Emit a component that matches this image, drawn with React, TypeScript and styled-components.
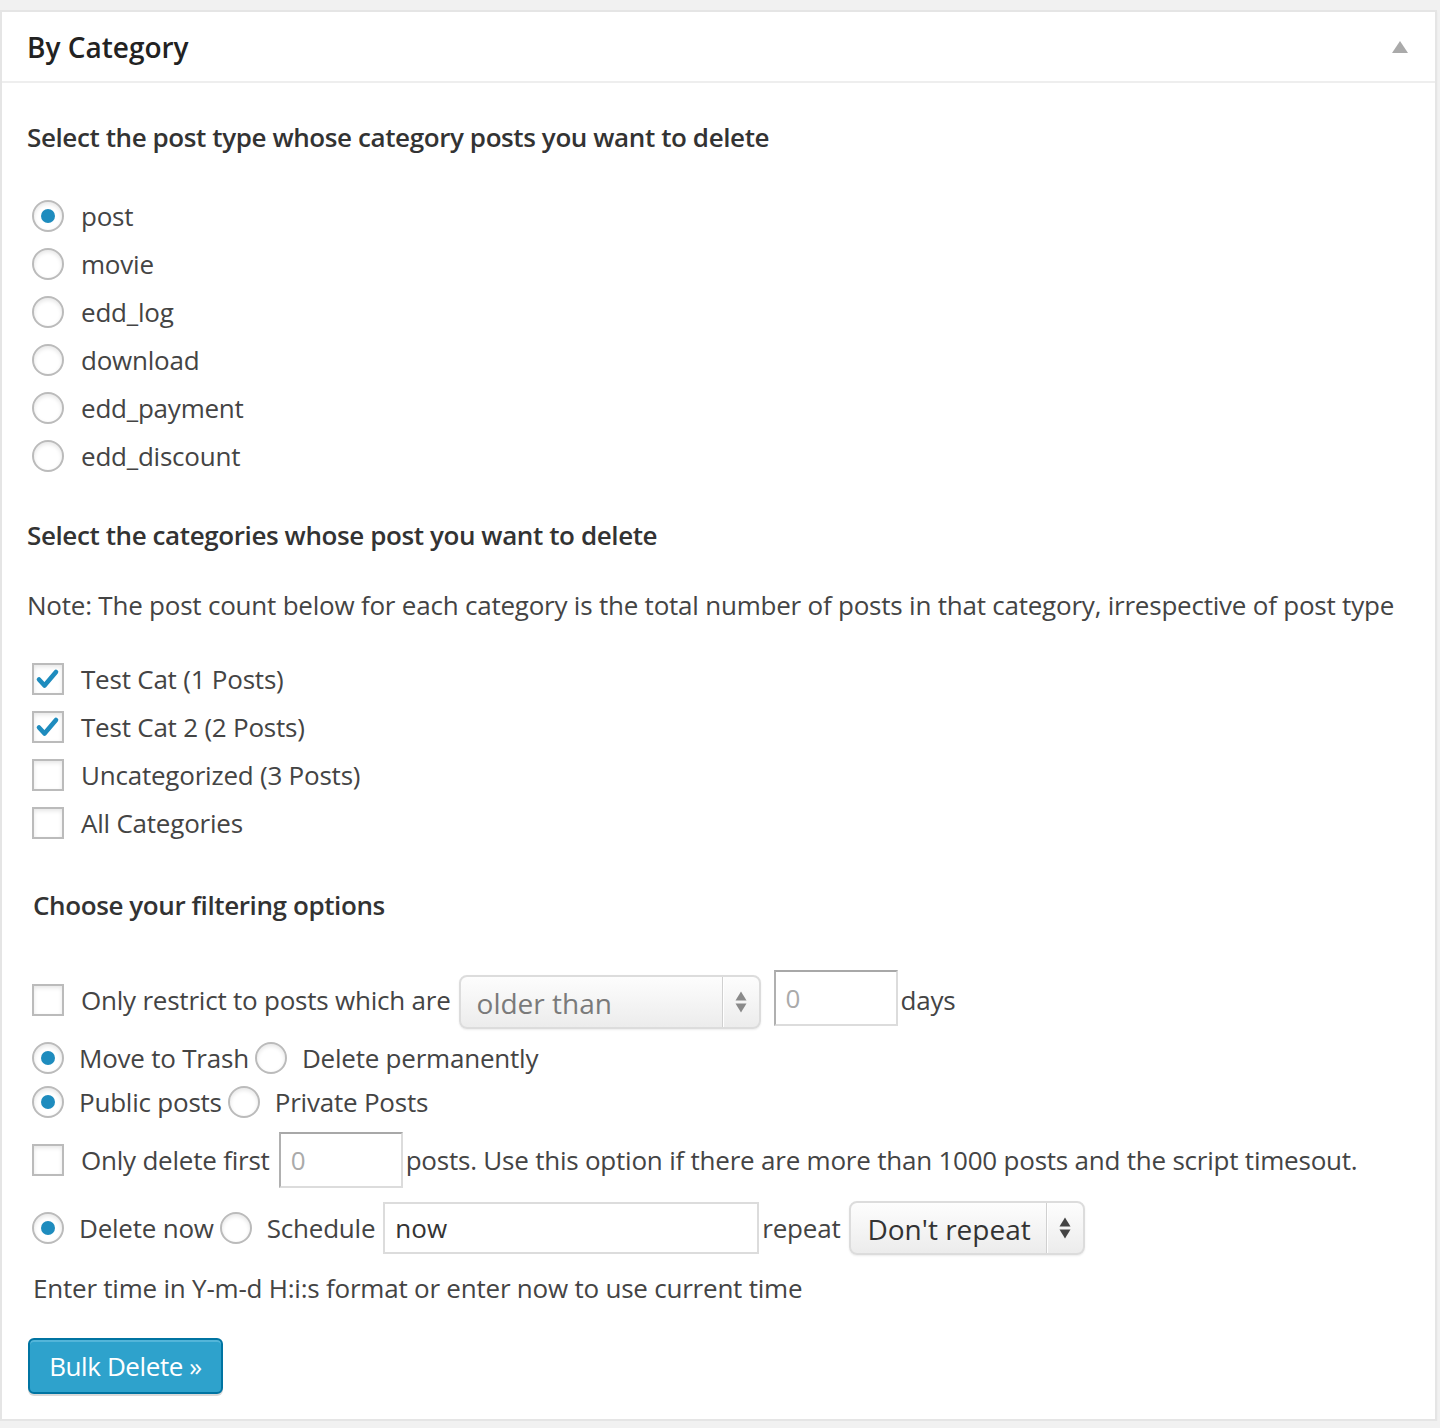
import React from "react";
import styled, { createGlobalStyle } from "styled-components";

const GlobalStyle = createGlobalStyle`
  html, body {
    margin: 0;
    padding: 0;
    background: #f1f1f1;
  }
  body {
    font-family: "Open Sans", "Noto Sans", sans-serif;
    color: #444;
    font-size: 26px;
    letter-spacing: -0.22px;
  }
`;

const Page = styled.div`
  padding-top: 10px;
`;

const Box = styled.div`
  width: 1433px;
  background: #fff;
  border: 2px solid #e5e5e5;
  box-shadow: 0 2px 2px rgba(0, 0, 0, 0.04);
`;

const BoxHeader = styled.div`
  height: 69px;
  display: flex;
  align-items: center;
  justify-content: space-between;
  padding: 0 26px 0 25px;
  border-bottom: 2px solid #eee;
`;

const BoxTitle = styled.h3`
  margin: 0;
  font-size: 28px;
  font-weight: 600;
  letter-spacing: 0;
  color: #222;
`;

const BoxBody = styled.div`
  padding: 0 25px 25px;
`;

const Heading = styled.h4<{ $top: number; $indent?: number }>`
  margin: ${(p) => p.$top}px 0 0;
  padding-left: ${(p) => p.$indent ?? 0}px;
  font-size: 26px;
  font-weight: 600;
  line-height: 36px;
  letter-spacing: -0.4px;
  color: #333;
`;

const Note = styled.p<{ $top: number; $indent?: number }>`
  margin: ${(p) => p.$top}px 0 0;
  padding-left: ${(p) => p.$indent ?? 0}px;
  font-size: 26px;
  line-height: 36px;
  color: #444;
  white-space: nowrap;
`;

const List = styled.div<{ $top: number }>`
  margin-top: ${(p) => p.$top}px;
  display: flex;
  flex-direction: column;
`;

const ListItem = styled.label`
  height: 48px;
  display: flex;
  align-items: center;
  gap: 17px;
  padding-left: 5px;
  font-size: 26px;
  color: #444;
`;

const RadioMark = styled.span<{ $on?: boolean }>`
  flex: none;
  box-sizing: border-box;
  width: 32px;
  height: 32px;
  border-radius: 50%;
  border: 2px solid #bbb;
  background: #fff;
  box-shadow: inset 0 2px 4px rgba(0, 0, 0, 0.1);
  display: flex;
  align-items: center;
  justify-content: center;
  &::before {
    content: "";
    display: ${(p) => (p.$on ? "block" : "none")};
    width: 14px;
    height: 14px;
    border-radius: 50%;
    background: #1e8cbe;
  }
`;

const CheckMark = styled.span`
  flex: none;
  box-sizing: border-box;
  width: 32px;
  height: 32px;
  border: 2px solid #bbb;
  background: #fff;
  box-shadow: inset 0 2px 4px rgba(0, 0, 0, 0.1);
  display: flex;
  align-items: center;
  justify-content: center;
`;

const Radio = ({ on }: { on?: boolean }) => <RadioMark $on={on} />;

const Checkbox = ({ on }: { on?: boolean }) => (
  <CheckMark>
    {on && (
      <svg width="28" height="28" viewBox="0 0 28 28">
        <path
          d="M5 14.5 L10.5 20.5 L22 7"
          fill="none"
          stroke="#1e8cbe"
          strokeWidth="4.6"
          strokeLinecap="round"
          strokeLinejoin="round"
        />
      </svg>
    )}
  </CheckMark>
);

const Filters = styled.div`
  margin-top: 47px;
  display: flex;
  flex-direction: column;
`;

const FilterRow = styled.div<{ $h: number }>`
  height: ${(p) => p.$h}px;
  display: flex;
  align-items: center;
  padding-left: 5px;
  font-size: 26px;
  color: #444;
  white-space: nowrap;
`;

const Label = styled.span<{ $left?: number; $right?: number }>`
  margin-left: ${(p) => p.$left ?? 0}px;
  margin-right: ${(p) => p.$right ?? 0}px;
`;

const SelectBox = styled.div<{ $w: number; $muted?: boolean }>`
  box-sizing: border-box;
  width: ${(p) => p.$w}px;
  height: 54px;
  display: flex;
  align-items: stretch;
  border: 2px solid #dcdcdc;
  border-radius: 8px;
  background: linear-gradient(to bottom, #fdfdfd 0%, #f3f3f3 60%, #ececec 100%);
  box-shadow: 0 1px 2px rgba(0, 0, 0, 0.08);
  color: ${(p) => (p.$muted ? "#7a7a7a" : "#333")};
  font-size: 28px;
  letter-spacing: 0;
  align-self: ${(p) => (p.$muted ? "flex-end" : "center")};
  margin-bottom: ${(p) => (p.$muted ? 1 : 0)}px;
`;

const SelectText = styled.span`
  flex: 1;
  display: flex;
  align-items: center;
  padding-left: 16px;
  padding-top: 2px;
`;

const SelectArrows = styled.span<{ $muted?: boolean }>`
  width: 36px;
  border-left: 1px solid #d0d0d0;
  box-shadow: inset 1px 0 0 #fff;
  display: flex;
  align-items: center;
  justify-content: center;
  color: ${(p) => (p.$muted ? "#8a8a8a" : "#444")};
`;

const Select = ({ w, text, muted }: { w: number; text: string; muted?: boolean }) => (
  <SelectBox $w={w} $muted={muted}>
    <SelectText>{text}</SelectText>
    <SelectArrows $muted={muted}>
      <svg width="12" height="24" viewBox="0 0 12 24">
        <path d="M6 1.5 L11.5 10.5 L0.5 10.5 Z" fill="currentColor" />
        <path d="M6 22.5 L11.5 13.5 L0.5 13.5 Z" fill="currentColor" />
      </svg>
    </SelectArrows>
  </SelectBox>
);

const TextField = styled.input<{ $w: number; $h: number; $sunken?: boolean }>`
  box-sizing: border-box;
  width: ${(p) => p.$w}px;
  height: ${(p) => p.$h}px;
  padding: 0 10px;
  font-family: "Open Sans", "Noto Sans", sans-serif;
  font-size: 26px;
  color: ${(p) => (p.$sunken ? "#aaa" : "#333")};
  background: #fff;
  border: 2px solid #dcdcdc;
  border-top-color: ${(p) => (p.$sunken ? "#a8a8a8" : "#dcdcdc")};
  border-left-color: ${(p) => (p.$sunken ? "#b0b0b0" : "#dcdcdc")};
  border-radius: 0;
  outline: none;
`;

const Button = styled.button`
  margin-top: 32px;
  margin-left: 1px;
  box-sizing: border-box;
  width: 195px;
  height: 56px;
  padding: 0;
  border: 2px solid #0074a2;
  border-radius: 6px;
  background: #2ea2cc;
  box-shadow: inset 0 2px 0 rgba(120, 200, 230, 0.5), 0 2px 0 rgba(0, 0, 0, 0.15);
  color: #fff;
  font-family: "Open Sans", "Noto Sans", sans-serif;
  font-size: 26px;
  letter-spacing: -0.4px;
`;

const postTypes = ["post", "movie", "edd_log", "download", "edd_payment", "edd_discount"];

const categories = [
  { name: "Test Cat (1 Posts)", on: true },
  { name: "Test Cat 2 (2 Posts)", on: true },
  { name: "Uncategorized (3 Posts)", on: false },
  { name: "All Categories", on: false },
];

export default function App() {
  return (
    <Page>
      <GlobalStyle />
      <Box>
        <BoxHeader>
          <BoxTitle>By Category</BoxTitle>
          <svg width="18" height="14" viewBox="0 0 18 14">
            <path d="M9 1 L17 13 L1 13 Z" fill="#aaa" />
          </svg>
        </BoxHeader>
        <BoxBody>
          <Heading $top={36}>Select the post type whose category posts you want to delete</Heading>
          <List $top={37}>
            {postTypes.map((t, i) => (
              <ListItem key={t}>
                <Radio on={i === 0} />
                {t}
              </ListItem>
            ))}
          </List>
          <Heading $top={37}>Select the categories whose post you want to delete</Heading>
          <Note $top={34}>
            Note: The post count below for each category is the total number of posts in that
            category, irrespective of post type
          </Note>
          <List $top={32}>
            {categories.map((c) => (
              <ListItem key={c.name}>
                <Checkbox on={c.on} />
                {c.name}
              </ListItem>
            ))}
          </List>
          <Heading $top={40} $indent={6}>
            Choose your filtering options
          </Heading>
          <Filters>
            <FilterRow $h={60}>
              <Checkbox />
              <Label $left={17} $right={8}>
                Only restrict to posts which are
              </Label>
              <Select w={302} text="older than" muted />
              <Label $left={13} />
              <TextField $w={124} $h={56} $sunken defaultValue="0" style={{ alignSelf: "flex-start" }} />
              <Label $left={3}>days</Label>
            </FilterRow>
            <FilterRow $h={56}>
              <Radio on />
              <Label $left={15} $right={6}>
                Move to Trash
              </Label>
              <Radio />
              <Label $left={15}>Delete permanently</Label>
            </FilterRow>
            <FilterRow $h={32}>
              <Radio on />
              <Label $left={15} $right={6}>
                Public posts
              </Label>
              <Radio />
              <Label $left={15}>Private Posts</Label>
            </FilterRow>
            <FilterRow $h={84}>
              <Checkbox />
              <Label $left={17} $right={9}>
                Only delete first
              </Label>
              <TextField $w={124} $h={56} $sunken defaultValue="0" />
              <Label $left={3}>
                posts. Use this option if there are more than 1000 posts and the script timesout.
              </Label>
            </FilterRow>
            <FilterRow $h={52}>
              <Radio on />
              <Label $left={15} $right={6}>
                Delete now
              </Label>
              <Radio />
              <Label $left={15} $right={8}>
                Schedule
              </Label>
              <TextField $w={376} $h={52} defaultValue="now" />
              <Label $left={3} $right={9}>
                repeat
              </Label>
              <Select w={236} text="Don't repeat" />
            </FilterRow>
            <Note $top={16} $indent={6}>
              Enter time in Y-m-d H:i:s format or enter now to use current time
            </Note>
          </Filters>
          <Button>Bulk Delete »</Button>
        </BoxBody>
      </Box>
    </Page>
  );
}
